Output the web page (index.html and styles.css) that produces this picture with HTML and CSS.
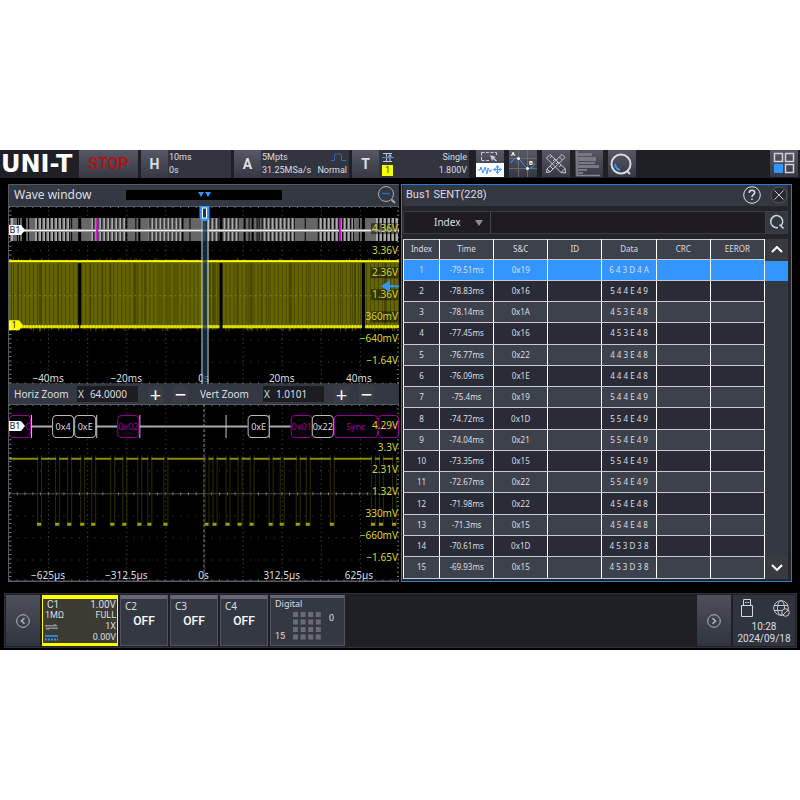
FILE: index.html
```html
<!DOCTYPE html>
<html lang="en">
<head>
<meta charset="utf-8">
<title>UNI-T Oscilloscope</title>
<link rel="stylesheet" href="styles.css">
</head>
<body>
<main class="scope">
  <header class="topbar">
    <h1 class="logo">UNI-T</h1>
    <button class="stop">STOP</button>
    <section class="group group-h">
      <button class="key">H</button>
      <div class="info"><span>10ms</span><span>0s</span></div>
    </section>
    <section class="group group-a">
      <button class="key">A</button>
      <div class="info">
        <div class="pair"><span>5Mpts</span>
          <svg width="16" height="9" viewBox="0 0 16 9" fill="none" stroke="#2b6da8"><path d="M0 7.5H3.5V2Q3.5 1 5 1H9Q10.500 1 10.500 2V7.500H15.500"/></svg></div>
        <div class="pair"><span>31.25MSa/s</span><span>Normal</span></div>
      </div>
    </section>
    <section class="group group-t">
      <button class="key">T</button>
      <div class="info">
        <div class="pair">
          <svg width="12" height="11" viewBox="0 0 12 11" fill="none" stroke="#c9ccd2"><path d="M1 1.500H10M1 9.500H10M4 1.500Q6 5.500 4 9.500M8 3V9.500M6.500 4.500L8 2.500L9.500 4.500"/><path d="M0 5.500H12" stroke="#3396ff"/></svg>
          <span>Single</span></div>
        <div class="pair"><b class="chan">1</b><span>1.800V</span></div>
      </div>
    </section>
    <nav class="tools">
      <button class="tool" aria-label="Zoom select">
        <svg width="28" height="27" viewBox="0 0 28 27" fill="none"><path d="M0 13H28V27H0Z" fill="#fff"/><path d="M5.500 2.500H20.500M5.500 10.500H14M5.500 2.500V10.500M20.500 2.500V5" stroke="#c9ccd2" stroke-dasharray="3 1.500"/><path d="M14 5L20 7L18 8L21 10.500L20 11.500L17 9L16 11Z" fill="#c9ccd2"/><path d="M2 20H4L5 17L7 23L9 17L11 24L12 18L14 22L15 20H16" stroke="#3396ff"/><path d="M18 19.500H25M21.500 16V23" stroke="#3396ff"/><path d="M17 19.500L19.500 17.500V21.500ZM26 19.500L23.500 17.500V21.500ZM21.500 15L19.500 17.500H23.500ZM21.500 24L19.500 21.500H23.500Z" fill="#3396ff"/></svg>
      </button>
      <button class="tool" aria-label="Cursor">
        <svg width="28" height="27" viewBox="0 0 28 27" fill="none"><path d="M0 8.500H28M0 18.500H28M9.500 0V27M18.500 0V27" stroke="#6a6c74"/><path d="M2 13C5 7 9 7 12 11S18 20 22 18Q25 16 26 13" stroke="#3396ff"/><circle cx="9.500" cy="8.500" r="1.500" fill="#fff"/><circle cx="18.500" cy="18.500" r="1.500" fill="#fff"/><text x="2" y="6" class="tiny">A</text><text x="20" y="15" class="tiny">B</text></svg>
      </button>
      <button class="tool" aria-label="Measure">
        <svg width="28" height="27" viewBox="0 0 28 27" fill="none" stroke="#c9ccd2"><path d="M8 4.500L23 18.500L19 22.500L4.500 8Z M8 8L10 6M11 11L13 9M14 14L16 12M17 17L19 15M20 4.500L23 7.500L8 22L5 19Z M17.500 7L20.500 10M8 16L11 19"/><path d="M19 22.500L23.500 23L23 18.500M5 19L4.500 22.500L8 22"/></svg>
      </button>
      <button class="tool" aria-label="Statistics">
        <svg width="28" height="27" viewBox="0 0 28 27"><path d="M2 1V26M2 25.500H25" stroke="#85878f" stroke-width="1.500"/><path d="M3 3H17V6H3ZM3 7H21V11H3ZM3 12H20V14H3ZM3 15H24V18H3ZM3 19H12V21H3ZM3 22H8V24H3Z" fill="#777982"/></svg>
      </button>
      <button class="tool" aria-label="Search waveform">
        <svg width="28" height="27" viewBox="0 0 28 27" fill="none" stroke-width="2"><circle cx="13" cy="14" r="9.500" stroke="#d8dade"/><path d="M19 21L22 24" stroke="#d8dade"/><path d="M7 14Q8 19 12 20" stroke="#3396ff"/></svg>
      </button>
    </nav>
    <button class="tool home" aria-label="Windows">
      <svg width="28" height="27" viewBox="0 0 28 27" fill="none" stroke="#d0d2d6" stroke-width="1.500"><path d="M4.500 3.500H12.500V11.500H4.500ZM15.500 3.500H23.500V11.500H15.500ZM15.500 14.500H23.500V22.500H15.500Z"/><path d="M4 14H13V23H4Z" fill="#3396ff" stroke="none"/></svg>
    </button>
  </header>

  <div class="panes">
    <section class="wave">
      <div class="wave-head">
        <h2>Wave window</h2>
        <div class="overview"><svg width="13" height="5" viewBox="0 0 13 5"><path d="M0 0H6L3 5ZM7 0H13L10 5Z" fill="#3396ff"/></svg></div>
        <button class="plain" aria-label="Zoom out"><svg width="20" height="20" viewBox="0 0 20 20" fill="none" stroke="#a9acb3"><circle cx="9" cy="9" r="7.500"/><path d="M14.500 14.500L18 18" stroke-width="2"/><path d="M5 8.500H13" stroke="#2b6da8" stroke-width="1.500"/></svg></button>
      </div>
      <svg class="plot" id="main-plot" viewBox="0 0 389 178"></svg>
      <div class="zoombar">
        <label for="hz">Horiz Zoom</label>
        <span class="factor">X <input id="hz" value="64.0000"></span>
        <button class="step">+</button><button class="step">−</button>
        <label for="vz" class="second">Vert Zoom</label>
        <span class="factor">X <input id="vz" value="1.0101"></span>
        <button class="step">+</button><button class="step">−</button>
      </div>
      <svg class="plot" id="zoom-plot" viewBox="0 0 389 177"></svg>
    </section>

    <section class="bus">
      <div class="bus-head">
        <h2>Bus1 SENT(228)</h2>
        <button class="plain" aria-label="Help"><svg width="18" height="18" viewBox="0 0 18 18" fill="none" stroke="#e0e2e6"><circle cx="9" cy="9" r="8.300"/><path d="M6.300 7Q6.300 4.300 9 4.300T11.700 6.800Q11.700 8 10 9Q9 9.700 9 11" stroke-width="1.500"/><path d="M9 12.500V14" stroke-width="1.500"/></svg></button>
        <button class="plain" aria-label="Close"><svg width="18" height="18" viewBox="0 0 18 18" fill="none"><circle cx="9" cy="9" r="8" fill="#292a2d" stroke="#55565a"/><path d="M4.500 4.500L13.500 13.500M13.500 4.500L4.500 13.500" stroke="#c9cbd0"/></svg></button>
      </div>
      <div class="filter">
        <div class="pick"><select aria-label="Search field"><option>Index</option></select><svg width="8" height="6" viewBox="0 0 8 6"><path d="M0 0H8L4 6Z" fill="#8d8d90"/></svg></div>
        <input class="query" aria-label="Search value">
        <button class="find" aria-label="Search"><svg width="16" height="16" viewBox="0 0 16 16" fill="none" stroke="#d5d7db" stroke-width="1.500"><path d="M9 13.500A6 6 0 1 1 12.300 11.500M10.500 10.500L14.500 14.500"/></svg></button>
      </div>
      <div class="results">
        <table>
          <thead><tr><th class="idx">Index</th><th>Time</th><th>S&amp;C</th><th>ID</th><th>Data</th><th>CRC</th><th>EEROR</th></tr></thead>
          <tbody id="rows"></tbody>
        </table>
        <div class="scroll">
          <button aria-label="Scroll up"><svg width="12" height="7" viewBox="0 0 12 7" fill="none" stroke="#fff" stroke-width="2"><path d="M1 6L6 1L11 6"/></svg></button>
          <div class="thumb"></div>
          <button class="down" aria-label="Scroll down"><svg width="12" height="7" viewBox="0 0 12 7" fill="none" stroke="#fff" stroke-width="2"><path d="M1 1L6 6L11 1"/></svg></button>
        </div>
      </div>
    </section>
  </div>

  <footer class="channels">
    <button class="pager" aria-label="Previous"><svg width="14" height="14" viewBox="0 0 14 14" fill="none" stroke="#b4b6bb"><circle cx="7" cy="7" r="6.300"/><path d="M8.500 4.300L5.500 7L8.500 9.700" stroke-width="1.500"/></svg></button>
    <section class="ch ch1">
      <div class="pair big"><span>C1</span><span>1.00V</span></div>
      <div class="pair"><span>1MΩ</span><span>FULL</span></div>
      <div class="pair"><svg width="13" height="6" viewBox="0 0 13 6" fill="none" stroke="#8c8c9c" stroke-width="1.500"><path d="M0 1.800H12L9 .3M13 4.300H1L4 5.800"/></svg><span>1X</span></div>
      <div class="pair"><svg width="13" height="6" viewBox="0 0 13 6" stroke="#3396ff" stroke-width="1.500"><path d="M0 1H13"/><path d="M0 4.500H13" stroke-width="2" stroke-dasharray="2 1"/></svg><span>0.00V</span></div>
    </section>
    <section class="ch off"><span>C2</span><b>OFF</b></section>
    <section class="ch off"><span>C3</span><b>OFF</b></section>
    <section class="ch off"><span>C4</span><b>OFF</b></section>
    <section class="ch digital">
      <span class="name">Digital</span>
      <span class="last">15</span>
      <svg width="28" height="28" viewBox="0 0 28 28" stroke="#6a6a78" stroke-width="5"><path d="M0 2.500H28M0 10H28M0 17.500H28M0 25H28" stroke-dasharray="5 2.600"/></svg>
      <span class="first">0</span>
    </section>
    <button class="pager next" aria-label="Next"><svg width="14" height="14" viewBox="0 0 14 14" fill="none" stroke="#b4b6bb"><circle cx="7" cy="7" r="6.300"/><path d="M5.500 4.300L8.500 7L5.500 9.700" stroke-width="1.500"/></svg></button>
    <section class="status">
      <div class="icons">
        <svg width="12" height="18" viewBox="0 0 12 18" fill="none" stroke="#d5d7db"><path d="M.5 6.500H11.500V17.500H.5ZM2.500 6.500V.5H9.500V6.500M4 3.500H5.500M6.500 3.500H8"/></svg>
        <svg width="17" height="17" viewBox="0 0 17 17" fill="none" stroke="#c5c7cc"><circle cx="8" cy="8" r="7.300"/><ellipse cx="8" cy="8" rx="3.500" ry="7.300"/><path d="M1 5.500H15M1 10.500H15"/><circle cx="12.500" cy="12.500" r="3.800" fill="#343843"/><path d="M10 15L15 10"/></svg>
      </div>
      <time>10:28</time><time>2024/09/18</time>
    </section>
  </footer>
</main>
<script src="scope.js"></script>
</body>
</html>
```
FILE: styles.css
```css
* { box-sizing: border-box; }
body {
  margin: 0;
  min-height: 100vh;
  display: flex;
  flex-direction: column;
  justify-content: center;
  background: #fff;
  color: #dcdee2;
  font: 9px/12px Roboto, sans-serif;
}
h1, h2 { margin: 0; font-weight: 400; }
button {
  border: 0;
  padding: 0;
  margin: 0;
  color: inherit;
  font: inherit;
  background: none;
  display: flex;
  align-items: center;
  justify-content: center;
}
svg { display: block; flex: none; }
.scope { background: #000; padding-bottom: 2px; }
.pair { display: flex; justify-content: space-between; align-items: center; }

/* top bar */
.topbar { display: flex; height: 28px; padding-right: 2px; background: #1f2026; }
.logo { width: 79px; padding-left: 1px; font: 700 24px/28px "DejaVu Sans", sans-serif; color: #fff; }
.stop, .key, .tool { background: linear-gradient(#565863, #363943); }
.stop { width: 59px; margin-right: 3px; font-size: 16px; font-weight: 500; color: #b80f0c; }
.group { display: flex; background: #32353f; margin-right: 3px; }
.group-h { width: 90px; }
.group-a { width: 115px; }
.group-t { width: 117px; margin-right: 7px; }
.key { width: 27px; flex: none; font-size: 14px; font-weight: 700; }
.info { flex: 1; display: flex; flex-direction: column; justify-content: center; gap: 1px; padding: 0 2px 0 1px; }
.group-t .info { padding-left: 3px; }
.chan { width: 11px; height: 11px; background: #ff0; color: #333; line-height: 11px; text-align: center; font-weight: 400; }
.tools { display: flex; gap: 5px; }
.tool { width: 28px; height: 27px; }
.home { margin-left: auto; }
.tiny { font-size: 6px; font-weight: 700; fill: #fff; }

/* panels */
.panes { display: grid; grid-template-columns: 1fr 1fr; gap: 2px; padding: 6px 8px 11px; align-items: stretch; }
.wave { border: 1px solid #565a64; border-right: 0; background: #343843; font: 11px/14px "Noto Sans", sans-serif; }
.wave-head { display: flex; align-items: center; height: 21px; padding: 0 2px 0 5px; }
.wave-head h2 { flex: none; width: 112px; font-size: 12px; }
.overview { width: 156px; height: 10px; background: #000; display: flex; justify-content: center; padding-top: 2px; }
.wave-head .plain { margin-left: auto; }
.plot { width: 100%; height: auto; background: #000; font: 10px "Noto Sans", sans-serif; fill: #dcdee2; }
.code { font-size: 9px; }
.zoombar { display: flex; align-items: center; height: 20px; padding: 0 5px; gap: 10px; font-size: 10px; }
.zoombar label { width: 53px; white-space: nowrap; }
.zoombar .second { margin-left: 2px; }
.factor { display: flex; gap: 6px; width: 61px; background: #1c1c21; font-size: 10px; padding: 1px; }
.factor input { width: 46px; border: 0; padding: 0; background: none; color: inherit; font: inherit; }
.step { width: 15px; height: 17px; background: #3b3d46; font-size: 20px; line-height: 17px; color: #fff; }

.bus { border: 1px solid #2b7ad6; background: #24252b; padding: 0 3px 2px 1px; }
.bus-head { display: flex; align-items: center; height: 21px; gap: 9px; background: #343843; padding-left: 3px; }
.bus-head h2 { flex: 1; font-size: 11px; }
.filter { display: flex; gap: 1px; height: 23px; margin: 5px 0; background: #42434b; border: 1px solid #3a3b43; }
.pick { position: relative; width: 86px; background: #1f1c21; }
.pick select { appearance: none; width: 100%; height: 100%; border: 0; padding: 0 0 0 30px; background: none; color: inherit; font: 10px "Noto Sans", sans-serif; }
.pick svg { position: absolute; right: 7px; top: 8px; }
.query { flex: 1; min-width: 0; border: 0; background: #1f1c21; color: inherit; }
.find { width: 21px; background: #343843; }
.results { display: flex; height: 340px; }
.results table { flex: 1; width: 100%; height: 100%; table-layout: fixed; border-collapse: collapse; font: 8px/10px "Noto Sans", sans-serif; }
th, td { border: 1px solid #c9cacd; border-left-color: #fff; border-right-color: #fff; padding: 0; text-align: center; font-weight: 400; }
th { height: 20px; }
.idx { width: 36px; }
thead tr { background: #3d414b; }
tbody tr { background: #3d414b; }
tbody tr:nth-child(even) { background: #292c36; }
tbody tr:first-child { background: #3396ff; }
.scroll { display: flex; flex-direction: column; flex: none; width: 23px; background: #343843; }
.scroll button { height: 22px; background: #3a3a41; }
.thumb { height: 20px; background: #3396ff; }
.scroll .down { margin-top: auto; }

/* channel bar */
.channels { display: flex; gap: 2px; margin: 0 3px 0 4px; padding: 1px; height: 55px; background: #1f2026; border: 1px solid #30313a; }
.pager { width: 34px; background: linear-gradient(#4d5059, #30343e); }
.ch { width: 48px; background: #343843; border: 1px solid #50525e; border-top: 4px solid #656576; padding: 0 4px; }
.ch1 { width: 76px; background: #3b3b34; border: 2px solid #ff0; border-width: 4px 1px 3px; padding: 0 1px 0 2px; line-height: 11px; display: flex; flex-direction: column; justify-content: center; }
.ch1 .big { font-size: 10px; padding-left: 2px; }
.off span { font: 10px/14px "Noto Sans", sans-serif; display: block; }
.off b { display: block; font-size: 12px; line-height: 16px; font-weight: 500; text-align: center; color: #fff; }
.digital { width: 75px; display: grid; grid-template-columns: 18px 28px 1fr; grid-template-rows: 14px 30px; border-top-width: 3px; }
.digital .name { grid-column: 1 / 4; font: 9px/12px "Noto Sans", sans-serif; }
.digital .last { align-self: end; }
.digital .first { padding-left: 8px; }
.next { margin-left: auto; }
.status { width: 62px; background: #30343e; font-size: 10px; line-height: 12px; text-align: center; }
.status time { display: block; }
.icons { display: flex; justify-content: space-between; align-items: end; padding: 4px 5px 4px 8px; }
```
FILE: scope.js
```js
const rows = [
  ["-79.51ms", "0x19", "6 4 3 D 4 A"], ["-78.83ms", "0x16", "5 4 4 E 4 9"],
  ["-78.14ms", "0x1A", "4 5 3 E 4 8"], ["-77.45ms", "0x16", "4 5 3 E 4 8"],
  ["-76.77ms", "0x22", "4 4 3 E 4 8"], ["-76.09ms", "0x1E", "4 4 4 E 4 8"],
  ["-75.4ms", "0x19", "5 4 4 E 4 9"], ["-74.72ms", "0x1D", "5 5 4 E 4 9"],
  ["-74.04ms", "0x21", "5 5 4 E 4 9"], ["-73.35ms", "0x15", "5 5 4 E 4 9"],
  ["-72.67ms", "0x22", "5 5 4 E 4 9"], ["-71.98ms", "0x22", "4 5 4 E 4 8"],
  ["-71.3ms", "0x15", "4 5 4 E 4 8"], ["-70.61ms", "0x1D", "4 5 3 D 3 8"],
  ["-69.93ms", "0x15", "4 5 3 D 3 8"]
];
document.getElementById("rows").innerHTML = rows.map((r, i) =>
  `<tr><td>${i + 1}</td><td>${r[0]}</td><td>${r[1]}</td><td></td><td>${r[2]}</td><td></td><td></td></tr>`).join("");

const line = (d, stroke, extra = "") => `<path d="${d}" fill="none" stroke="${stroke}" ${extra}/>`;
const rect = (x, y, w, h, fill, extra = "") => `<rect x="${x}" y="${y}" width="${w}" height="${h}" fill="${fill}" ${extra}/>`;
const text = (x, y, s, fill, anchor = "middle", cls = "") => `<text x="${x}" y="${y}" fill="${fill}" text-anchor="${anchor}" class="${cls}">${s}</text>`;

// Dotted graticule: ten columns, eight rows, with edge ticks.
function grid(h) {
  let v = "", r = "";
  for (let i = -4; i <= 5; i++) v += `M${Math.round(194.5 + i * 38.8) + 0.5} 0V${h}`;
  for (let i = -3; i <= 3; i++) if (i) r += `M0 ${Math.round(88.5 + i * 22.1) + 0.5}H389`;
  return line(v, "#505050", 'stroke-dasharray="1 3.400"') +
    line(r, "#484848", 'stroke-dasharray="1 6.760"') +
    line("M0 89.500H389", "#484848") +
    line("M0 89.500H389", "#777", 'stroke-width="3" stroke-dasharray="1 6.760"') +
    line(`M0 1H389M0 ${h - 1}H389`, "#777", 'stroke-width="2" stroke-dasharray="1 6.760"') +
    line(`M1 0V${h}`, "#777", 'stroke-width="3" stroke-dasharray="1 3.400"') +
    line(`M388 0V${h}`, "#777", 'stroke-width="2" stroke-dasharray="1 3.400"') +
    line("M0 0.500H389", "#565a64") + line(`M0 ${h - 0.5}H389`, "#565a64");
}

const volts = (labels, base) => labels.map((s, i) => {
  const w = s.length * 6 - 3;
  return rect(388 - w, base - 9 + i * 22, w, 11, "#000", 'opacity=".45"') + text(388, base + i * 22, s, "#d6d62e", "end");
}).join("");
const times = (labels, y) => labels.map((s, i) => text([39, 117, 194, 272, 349][i], y, s, "#dcdee2")).join("");
const busTag = y => `<path d="M0 ${y - 5}H12L16 ${y}L12 ${y + 5}H0Z" fill="#fff"/>` + text(6, y + 3, "B1", "#222", "middle", "code");

function mainPlot() {
  const gaps = [70, 211, 353];
  let s = grid(178);
  let stripes = "", bright = "", seed = 7;
  for (let x = 0; x < 389; x++) {
    seed = (seed * 73 + 41) % 997;
    const dense = Math.sin(x / 9) > 0.35;
    if (gaps.some(g => Math.abs(x - g) < 2)) continue;
    if (dense ? seed % 6 : x % 4 === 1) stripes += `M${x + 0.5} 12V35`;
    if (!dense && x % 4 > 1) bright += `M${x + 0.5} 12V35`;
  }
  s += line(stripes, "#666") + line(bright, "#aaa");
  s += rect(0, 23, 389, 3, "#999") + line("M0 24.500H389", "#eee");
  s += rect(87, 12, 2, 23, "#c800c8") + rect(329, 12, 2, 23, "#c800c8");
  s += rect(0, 55, 389, 65, "#666600");
  let dark = "", noise = "", dots = "";
  for (let x = 2; x < 389; x++) {
    seed = (seed * 73 + 41) % 997;
    if (x % 4 === 0 || seed % 9 === 0) dark += `M${x + 0.5} 57V118`;
    if (seed % 3 === 0) noise += `M${x + 0.5} ${52 + seed % 4}V56M${x + 0.5} 119V${122 + seed % 4}`;
    if (x % 3 === 0) dots += `M${x + 0.5} 119V121`;
  }
  s += line(dark, "#474700") + line(noise, "#4c4c00");
  s += line("M0 89.500H389", "#848420", 'stroke-dasharray="2 3"');
  gaps.forEach(g => { s += rect(g - 1, 57, 3, 68, "#000"); });
  s += rect(0, 54, 389, 2, "#ff0") + rect(0, 119, 389, 3, "#d2d200") + line(dots, "#ff0");
  gaps.slice(1).forEach(g => { s += rect(g - 1, 118, 3, 5, "#000"); });
  s += rect(70, 118, 1, 5, "#000");
  s += times(["−40ms", "−20ms", "0s", "20ms", "40ms"], 176);
  s += rect(193, 0, 5, 178, "#12344c", 'opacity=".7"') + line("M192.500 0V178M198.500 0V178", "#cfdbe4");
  s += '<path d="M190 0H200V12L198 15H192L190 12Z" fill="#3396ff"/>' + rect(193, 2, 4, 10, "#0c3a66", 'stroke="#fff"');
  s += volts(["4.36V", "3.36V", "2.36V", "1.36V", "360mV", "−640mV", "−1.64V"], 26);
  s += '<path d="M371 80L380 74V86Z" fill="#3396ff"/>' + line("M379 80H389", "#3396ff", 'stroke-width="2"');
  s += busTag(24) + '<path d="M0 114H10L14 119L10 124H0Z" fill="#ff0"/>' + text(5, 122, "1", "#222", "middle", "code");
  return s;
}

function zoomPlot() {
  const lows = [30, 48, 60, 73, 84, 103, 115, 130, 140, 156, 197, 205, 218, 230, 242, 261, 272, 288, 298, 322, 363, 371, 384];
  let s = grid(177) + line("M194.500 0V177", "#888", 'stroke-dasharray="3 2"');
  let edges = "", high = "", low = "", x = 0;
  lows.forEach(l => {
    edges += `M${l - 1.5} 51V122M${l + 2.5} 51V122`;
    high += `M${x} 54.500H${l - 1}`;
    low += `M${l - 2} 120H${l + 2}`;
    x = l + 2;
  });
  high += `M${x} 54.500H389`;
  s += line(edges, "#2c2c00") + line(high, "#8c8c00", 'stroke-width="2"') + line(low, "#a0a000", 'stroke-width="3"');
  s += line("M22 22.500H43M87 22.500H108M130 22.500H238M260 22.500H281", "#aaa", 'stroke-width="2"');
  s += line("M216.500 11V34M22.500 11V34M87.500 11V34M130.500 11V34M259.500 11V34", "#ccc");
  [[0, 22, "", 1], [43, 22, "0x4"], [65, 22, "0xE"], [108, 22, "0x02", 1], [238, 22, "0xE"], [281, 22, "0x01", 1],
    [302, 22, "0x22"], [324, 44, "Sync", 1], [368, 21, "0x00", 1]].forEach(([bx, w, label, magenta]) => {
    s += rect(bx + 0.5, 11.5, w - 1, 22, "#000", `rx="4" stroke="${magenta ? "#970097" : "#bbb"}"`);
    s += text(bx + w / 2, 26, label, magenta ? "#a000a0" : "#dcdee2", "middle", "code");
  });
  s += text(19, 26, "C", "#a000a0", "middle", "code") + busTag(22);
  s += volts(["4.29V", "3.3V", "2.31V", "1.32V", "330mV", "−660mV", "−1.65V"], 25);
  return s + times(["−625µs", "−312.5µs", "0s", "312.5µs", "625µs"], 175);
}
document.getElementById("main-plot").innerHTML = mainPlot();
document.getElementById("zoom-plot").innerHTML = zoomPlot();
```
